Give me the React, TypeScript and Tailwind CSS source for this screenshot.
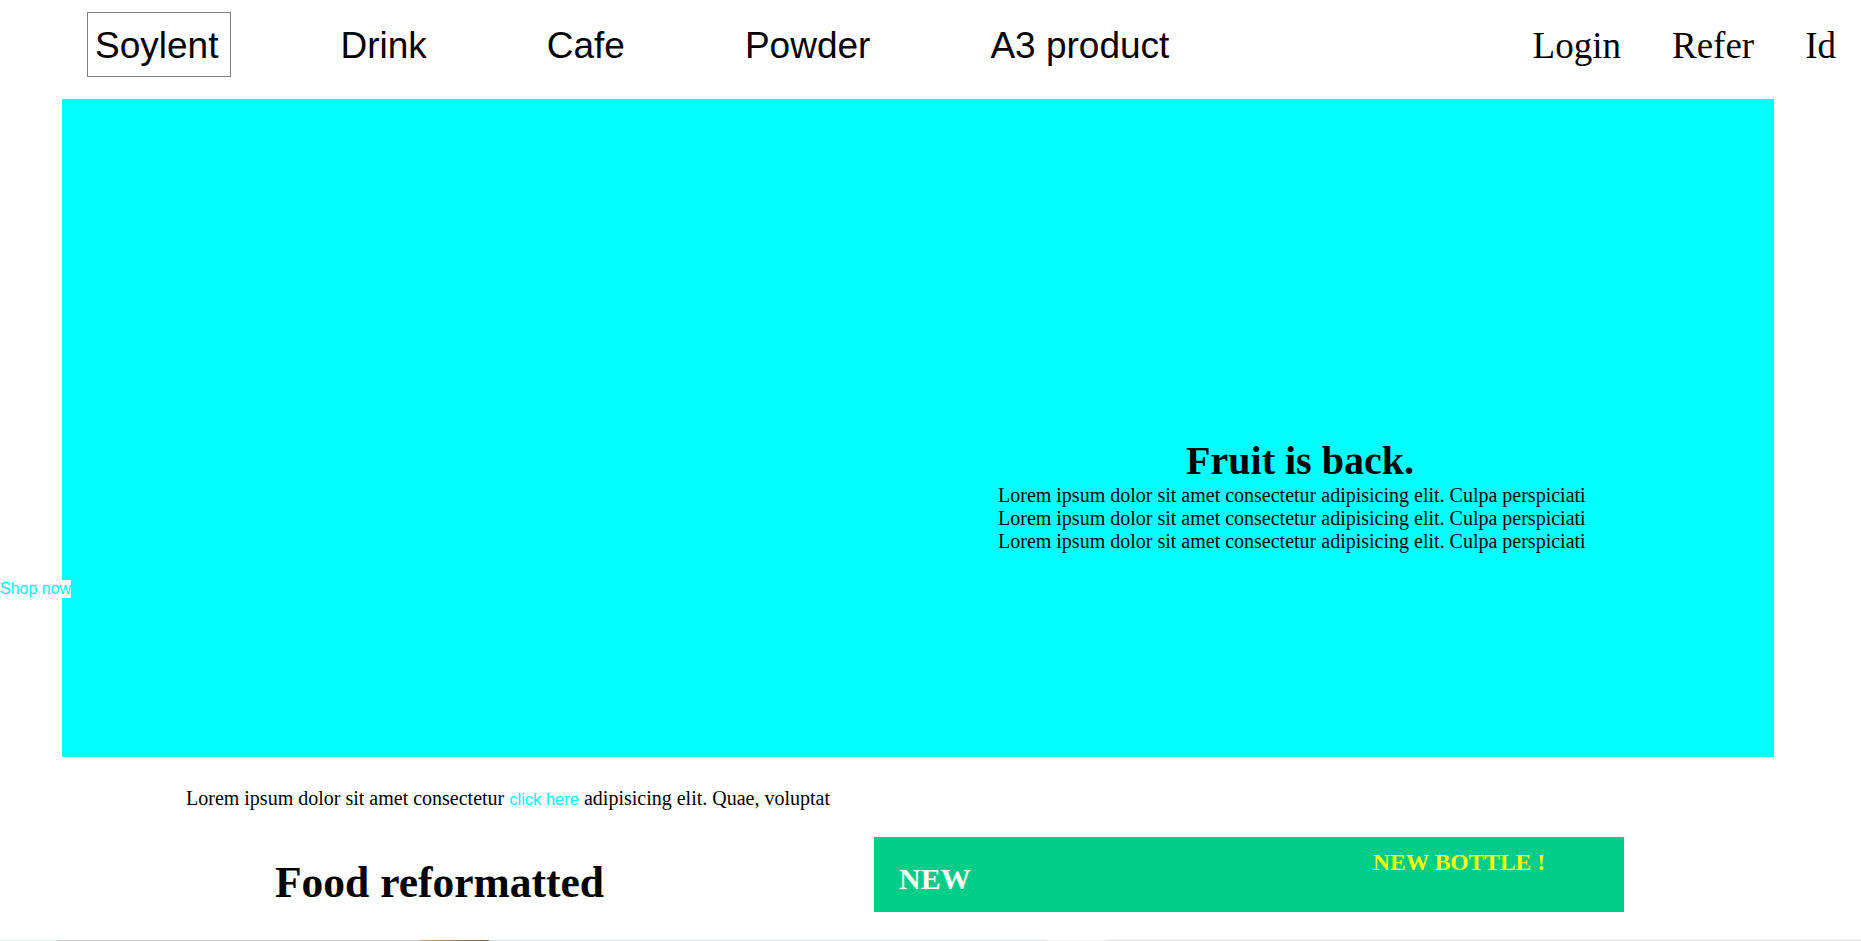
import React from 'react';

const leftLinks = ['Soylent', 'Drink', 'Cafe', 'Powder', 'A3 product'];
const rightLinks = ['Login', 'Refer', 'Id'];
const heroLine = 'Lorem ipsum dolor sit amet consectetur adipisicing elit. Culpa perspiciati';

const NavBar: React.FC = () => (
  <nav className="flex items-center justify-between h-[99px] pb-[10px]">
    <ul className="flex items-center gap-[98px] ml-[87px] font-['Liberation_Sans',Arial,sans-serif]">
      {leftLinks.map((label, i) => (
        <li
          key={label}
          className={
            i === 0
              ? 'border border-[#808080] pl-[7px] pr-[12px] pt-[12px] pb-[8px] text-[37px] leading-[42.5px]'
              : 'border border-transparent px-[10px] pt-[12px] pb-[8px] text-[37px] leading-[42.5px]'
          }
        >
          {label}
        </li>
      ))}
    </ul>
    <ul className="flex items-center gap-[51px] pr-[25px] pt-[4px] text-[37px] leading-[42.5px]">
      {rightLinks.map((label) => (
        <li key={label}>{label}</li>
      ))}
    </ul>
  </nav>
);

const Hero: React.FC = () => (
  <section className="ml-[62px] w-[1712px] h-[658px] bg-[#00ffff] pt-[339px] pl-[936px]">
    <div className="w-[604px]">
      <h1 className="text-center text-[40px] font-bold leading-[46px]">Fruit is back.</h1>
      {[0, 1, 2].map((n) => (
        <p key={n} className="text-[20px] leading-[23px] whitespace-nowrap">
          {heroLine}
        </p>
      ))}
    </div>
  </section>
);

export default function App() {
  return (
    <div className="relative w-[1861px] min-h-[941px] bg-white text-black font-['Liberation_Serif','Times_New_Roman',serif]">
      <NavBar />
      <Hero />

      {/* overlapping link on the hero's left edge */}
      <a className="absolute left-0 top-[580px] bg-white text-[#00ffff] text-[16px] leading-[18px] font-['Liberation_Sans',Arial,sans-serif]">
        Shop now
      </a>

      <p className="ml-[186px] mt-[30px] text-[20px] leading-[23px]">
        Lorem ipsum dolor sit amet consectetur{' '}
        <a className="text-[#00ffff] text-[16.5px] font-['Liberation_Sans',Arial,sans-serif]">click here</a>{' '}
        adipisicing elit. Quae, voluptat
      </p>

      <div className="flex items-start mt-[26px]">
        <div className="w-[874px] pl-[275px] pt-[20px]">
          <h2 className="text-[43.5px] font-bold leading-[50px] whitespace-nowrap">Food reformatted</h2>
        </div>
        <div className="flex items-start justify-between w-[750px] h-[75px] bg-[#00ce88] pl-[25px] pr-[79px] font-bold">
          <span className="mt-[25px] text-[30px] leading-[34px] text-white">NEW</span>
          <span className="mt-[12px] text-[23.5px] leading-[27px] text-[#ffff00]">NEW BOTTLE !</span>
        </div>
      </div>

      {/* top edge of the product images below the fold */}
      <div className="flex mt-[28px] h-[40px]">
        <div className="w-[58px] bg-[#d9eef0]" />
        <div className="w-[362px] bg-[#c9c9c9]" />
        <div className="w-[69px] bg-gradient-to-r from-[#d49a62] to-[#8a5a30]" />
        <div className="w-[558px] bg-[#d4e3e8]" />
        <div className="w-[60px] bg-[#eaf0f6]" />
        <div className="flex-1 bg-[#d6e2ea]" />
      </div>
    </div>
  );
}
